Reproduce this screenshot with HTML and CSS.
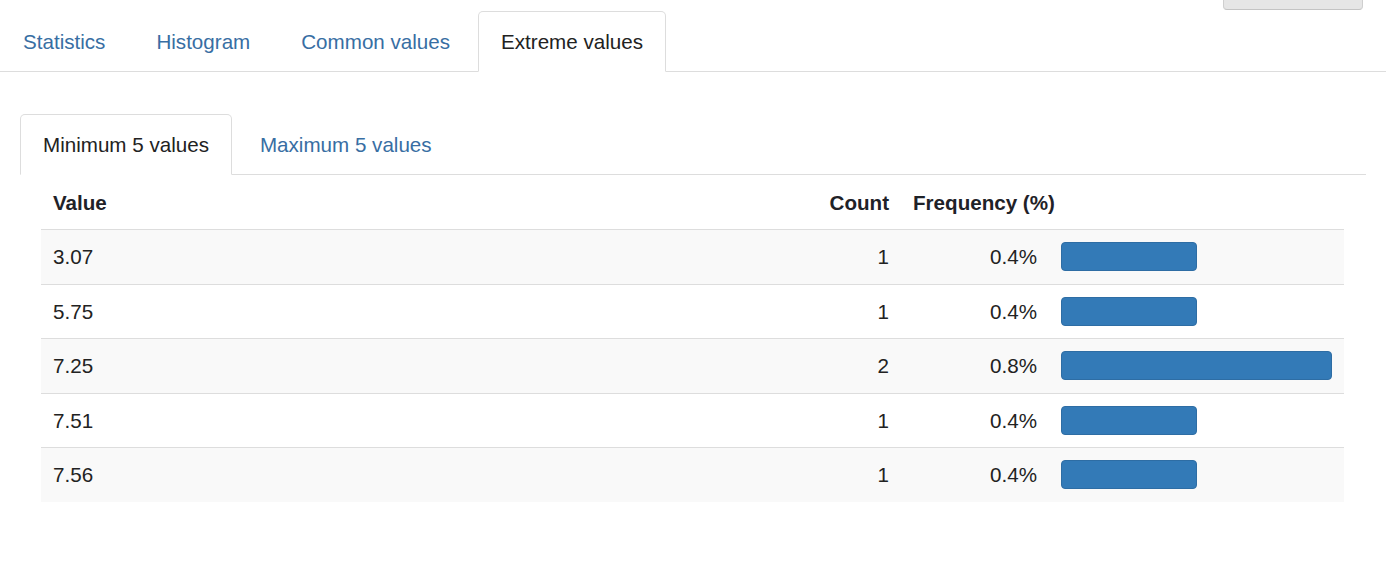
FILE: index.html
```html
<!DOCTYPE html>
<html lang="en">
<head>
<meta charset="utf-8">
<title>Extreme values</title>
<link rel="stylesheet" href="styles.css">
</head>
<body>
<div class="page">
  <div class="toolbar">
    <span class="btn-stub"></span>
  </div>
  <ul class="tabs">
    <li class="tab"><a href="#">Statistics</a></li>
    <li class="tab"><a href="#">Histogram</a></li>
    <li class="tab"><a href="#">Common values</a></li>
    <li class="tab active"><a href="#">Extreme values</a></li>
  </ul>
  <div class="pane">
    <ul class="tabs">
      <li class="tab active"><a href="#">Minimum 5 values</a></li>
      <li class="tab"><a href="#">Maximum 5 values</a></li>
    </ul>
    <table class="freq-table">
      <colgroup>
        <col class="c-value">
        <col class="c-count">
        <col class="c-freq">
        <col class="c-bar">
      </colgroup>
      <thead>
        <tr>
          <th>Value</th>
          <th class="num">Count</th>
          <th colspan="2">Frequency (%)</th>
        </tr>
      </thead>
      <tbody>
        <tr>
          <td>3.07</td>
          <td class="num">1</td>
          <td class="num">0.4%</td>
          <td><div class="bar" style="width: 50%"></div></td>
        </tr>
        <tr>
          <td>5.75</td>
          <td class="num">1</td>
          <td class="num">0.4%</td>
          <td><div class="bar" style="width: 50%"></div></td>
        </tr>
        <tr>
          <td>7.25</td>
          <td class="num">2</td>
          <td class="num">0.8%</td>
          <td><div class="bar" style="width: 100%"></div></td>
        </tr>
        <tr>
          <td>7.51</td>
          <td class="num">1</td>
          <td class="num">0.4%</td>
          <td><div class="bar" style="width: 50%"></div></td>
        </tr>
        <tr>
          <td>7.56</td>
          <td class="num">1</td>
          <td class="num">0.4%</td>
          <td><div class="bar" style="width: 50%"></div></td>
        </tr>
      </tbody>
    </table>
  </div>
</div>
</body>
</html>
```

FILE: styles.css
```css
* { box-sizing: border-box; }

html, body {
  margin: 0;
  padding: 0;
  background: #fff;
}

body {
  font-family: "Liberation Sans", Arial, Helvetica, sans-serif;
  font-size: 20.6px;
  color: #222;
}

.page {
  width: 1386px;
}

.toolbar {
  height: 11px;
  display: flex;
  justify-content: flex-end;
  padding-right: 23px;
}

.btn-stub {
  display: block;
  width: 140px;
  height: 10px;
  background: #e6e6e6;
  border: 1px solid #cfcfcf;
  border-top: 0;
  border-bottom-color: #c4c4c4;
  border-radius: 0 0 4px 4px;
}

.tabs {
  list-style: none;
  margin: 0;
  padding: 0;
  display: flex;
  border-bottom: 1px solid #ddd;
}

.tab {
  margin-bottom: -1px;
  margin-right: 5px;
}

.tab a {
  display: block;
  padding: 15px 22px;
  line-height: 29px;
  border: 1px solid transparent;
  border-radius: 5px 5px 0 0;
  color: #386ea3;
  text-decoration: none;
}

.tab.active a {
  color: #222;
  background: #fff;
  border-color: #ddd;
  border-bottom-color: transparent;
}

.pane {
  padding: 42px 20px 0;
}

.freq-table {
  width: calc(100% - 43px);
  margin: 0 22px 0 21px;
  border-collapse: collapse;
  table-layout: fixed;
}

.c-count { width: 150px; }
.c-freq { width: 148px; }
.c-bar { width: 295px; }

.freq-table th {
  text-align: left;
  font-weight: bold;
  padding: 12.5px 12px;
  line-height: 29px;
  border-bottom: 1px solid #ddd;
  color: #1f2228;
}

.freq-table td {
  padding: 12px 12px;
  line-height: 29.5px;
  border-top: 1px solid #ddd;
  vertical-align: middle;
  color: #222;
}

.freq-table .num {
  text-align: right;
}

.freq-table tbody tr:nth-child(odd) {
  background: #f9f9f9;
}

.bar {
  height: 29px;
  background: #337ab7;
  border: 1px solid #2e6da4;
  border-radius: 4px;
}
```
